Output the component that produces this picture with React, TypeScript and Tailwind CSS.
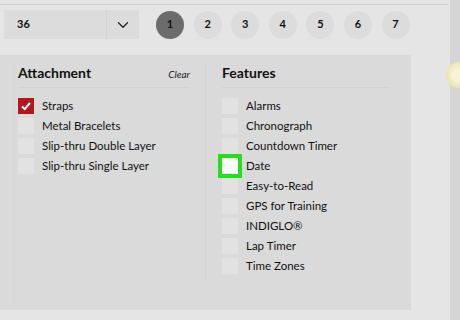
import { ChevronDown } from "lucide-react";

const attachments = [
  { label: "Straps", checked: true },
  { label: "Metal Bracelets" },
  { label: "Slip-thru Double Layer" },
  { label: "Slip-thru Single Layer" },
];

const features = [
  { label: "Alarms" },
  { label: "Chronograph" },
  { label: "Countdown Timer" },
  { label: "Date", highlight: true },
  { label: "Easy-to-Read" },
  { label: "GPS for Training" },
  { label: "INDIGLO®" },
  { label: "Lap Timer" },
  { label: "Time Zones" },
];

type Item = { label: string; checked?: boolean; highlight?: boolean };

function Box({ item }: { item: Item }) {
  if (item.checked) {
    return (
      <div className="w-[16px] h-[16px] bg-[#b3161b] flex items-center justify-center">
        <svg width="12" height="12" viewBox="0 0 12 12">
          <path d="M2 6.5 L4.8 9 L10 3" stroke="white" strokeWidth="2" fill="none" />
        </svg>
      </div>
    );
  }
  if (item.highlight) {
    return (
      <div className="w-[16px] h-[16px] bg-white outline-[4px] outline-solid outline-[#22e01a]" />
    );
  }
  return <div className="w-[16px] h-[16px] bg-[#e2e2e2]" />;
}

function Row({ item }: { item: Item }) {
  return (
    <div className="flex items-center h-[20px] gap-[8px]">
      <Box item={item} />
      <span className="text-[11.5px] text-[#111]">{item.label}</span>
    </div>
  );
}

export default function App() {
  return (
    <div
      className="w-[460px] h-[320px] bg-[#e5e5e5] flex overflow-hidden"
      style={{ fontFamily: "Lato, 'Open Sans', sans-serif" }}
    >
      <div className="w-[450px] flex flex-col">
        <div className="h-[4px]" />
        <div className="h-px bg-[#cfcfcf] mr-[2px]" />
        {/* Top bar */}
        <div className="flex items-center h-[29px] mt-[5px] pl-[4px]">
          <div className="flex w-[135px] h-[29px] bg-[#dcdcdc]">
            <div className="flex-1 flex items-center pl-[13px] text-[11px] font-bold text-[#111]">36</div>
            <div className="w-[33px] border-l border-[#d2d2d2] flex items-center justify-center">
              <ChevronDown className="w-[18px] h-[18px] text-[#222]" strokeWidth={1.75} />
            </div>
          </div>
          <div className="flex gap-[9.6px] ml-[17px]">
            {[1, 2, 3, 4, 5, 6, 7].map((n) => (
              <div
                key={n}
                className={
                  n === 1
                    ? "w-[28px] h-[28px] rounded-full bg-[#6c6c6c] flex items-center justify-center text-[11px] font-bold text-[#111]"
                    : "w-[28px] h-[28px] rounded-full bg-[#dcdcdc] flex items-center justify-center text-[11px] font-bold text-[#111]"
                }
              >
                {n}
              </div>
            ))}
          </div>
        </div>
        {/* Filter panel */}
        <div className="mt-[16px] w-[411px] h-[255px] bg-[#dadada] flex pt-[10px]">
          <div className="w-[205px] flex pl-[13px]">
            <div className="flex-1 border-l border-[#d6d6d6] h-[243px] pl-[4px] pr-[15px]">
              <div className="flex items-end justify-between h-[16px]">
                <span className="text-[14px] font-bold text-[#111] leading-[16px]">Attachment</span>
                <span className="text-[10px] italic text-[#222] leading-[14px]">Clear</span>
              </div>
              <div className="h-px bg-[#d2d2d2] mt-[6px] mb-[8px]" />
              {attachments.map((a) => (
                <Row key={a.label} item={a} />
              ))}
            </div>
          </div>
          <div className="w-[200px] flex">
            <div className="border-l border-[#d2d2d2] h-[216px]" />
            <div className="flex-1 pl-[16px] pr-[15px]">
              <div className="flex items-end h-[16px]">
                <span className="text-[14px] font-bold text-[#111] leading-[16px]">Features</span>
              </div>
              <div className="h-px bg-[#d2d2d2] mt-[6px] mb-[8px]" />
              {features.map((f) => (
                <Row key={f.label} item={f} />
              ))}
            </div>
          </div>
        </div>
      </div>
      <div className="relative w-[10px] bg-[#d5d5d5]">
        <div className="absolute left-[-4px] top-[62px] w-[26px] h-[26px] rounded-full bg-[radial-gradient(circle,#f6f2d6_35%,#e4d98a_100%)]" />
      </div>
    </div>
  );
}
